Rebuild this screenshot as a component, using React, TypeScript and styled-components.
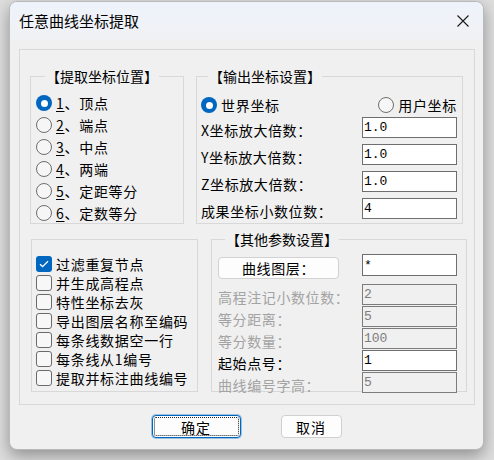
import React from 'react';
import styled, { createGlobalStyle } from 'styled-components';

const GlobalStyle = createGlobalStyle`
  * { box-sizing: border-box; }
  html, body { margin: 0; padding: 0; }
  body {
    background: #dcdcdc;
    font-family: "Noto Sans CJK SC", "Noto Sans", sans-serif;
    color: #000;
  }
`;

const Screen = styled.div`
  width: 494px;
  height: 460px;
  padding: 1px 0 0 9px;
  background: #dedede;
  overflow: hidden;
`;

const Window = styled.div`
  width: 475px;
  height: 449px;
  background: #f0f0f0;
  border: 1px solid #b9b9b9;
  border-radius: 8px;
  box-shadow: 0 6px 16px rgba(0, 0, 0, 0.35);
  overflow: hidden;
  display: flex;
  flex-direction: column;
`;

const TitleBar = styled.div`
  height: 38px;
  flex-shrink: 0;
  display: flex;
  align-items: center;
  justify-content: space-between;
  padding: 0 14px 0 9px;
  background: linear-gradient(#eef3fb, #f0f1f4);
`;

const Title = styled.span`
  font-size: 15px;
  line-height: 20px;
  margin-top: -1px;
`;

const CloseButton = styled.button`
  width: 12px;
  height: 12px;
  padding: 0;
  border: none;
  background: none;
  display: flex;
`;

const Content = styled.div`
  padding: 9px 9px 0 9px;
`;

const OuterFrame = styled.div`
  width: 456px;
  height: 356px;
  border: 1px solid #d8d8d8;
`;

const Row = styled.div<{ $top: number; $left: number; $gap: number }>`
  display: flex;
  margin-top: ${p => p.$top}px;
  padding-left: ${p => p.$left}px;
  gap: ${p => p.$gap}px;
`;

const Group = styled.div<{ $w: number; $h: number }>`
  position: relative;
  width: ${p => p.$w}px;
  height: ${p => p.$h}px;
  border: 1px solid #d8d8d8;
`;

const Legend = styled.span<{ $left: number }>`
  position: absolute;
  top: -10px;
  left: ${p => p.$left}px;
  padding: 0 1px;
  background: #f0f0f0;
  font-size: 14px;
  line-height: 18px;
`;

const RadioList = styled.div`
  padding: 15px 0 0 5px;
`;

const OptionRow = styled.label<{ $h: number }>`
  display: flex;
  align-items: center;
  gap: 4px;
  height: ${p => p.$h}px;
  font-size: 14px;
  letter-spacing: 0.7px;
  white-space: nowrap;
`;

const RadioDot = styled.span<{ $checked?: boolean }>`
  width: 16px;
  height: 16px;
  border-radius: 50%;
  flex-shrink: 0;
  background: ${p => (p.$checked ? '#0067c0' : '#f6f6f6')};
  border: ${p => (p.$checked ? 'none' : '1px solid #6e6e6e')};
  display: flex;
  align-items: center;
  justify-content: center;

  &::after {
    content: '';
    display: ${p => (p.$checked ? 'block' : 'none')};
    width: 7px;
    height: 7px;
    border-radius: 50%;
    background: #fff;
  }
`;

const Key = styled.span`
  text-decoration: underline;
  text-underline-offset: 2px;
`;

const OutputBody = styled.div`
  padding: 18px 5px 0 4px;
`;

const ModeRow = styled.div`
  display: flex;
  justify-content: space-between;
  height: 20px;
`;

const FieldList = styled.div<{ $top: number; $gap: number }>`
  display: flex;
  flex-direction: column;
  gap: ${p => p.$gap}px;
  margin-top: ${p => p.$top}px;
`;

const Field = styled.div`
  display: flex;
  justify-content: space-between;
  align-items: flex-end;
  height: 21px;
`;

const FieldLabel = styled.span<{ $disabled?: boolean }>`
  font-size: 14px;
  line-height: 15px;
  letter-spacing: 0.6px;
  color: ${p => (p.$disabled ? '#a3a3a3' : '#000')};
  white-space: nowrap;
`;

const Input = styled.input<{ $h?: number }>`
  width: 95px;
  height: ${p => p.$h ?? 21}px;
  border: 1px solid #6f6f6f;
  background: #fff;
  padding: 0 1px;
  font-family: "Liberation Mono", monospace;
  font-size: 13px;
  color: #000;
  outline: none;

  &:disabled {
    background: #f0f0f0;
    color: #7d7d7d;
    border-color: #7c7c7c;
  }
`;

const CheckList = styled.div`
  padding: 14px 0 0 4px;
`;

const CheckBox = styled.span<{ $checked?: boolean }>`
  width: 16px;
  height: 16px;
  border-radius: 3px;
  flex-shrink: 0;
  background: ${p => (p.$checked ? '#0067c0' : '#f7f7f7')};
  border: ${p => (p.$checked ? 'none' : '1px solid #6b6b6b')};
  display: flex;
  align-items: center;
  justify-content: center;
`;

const OtherBody = styled.div`
  padding: 14px 9px 0 6px;
`;

const LayerRow = styled.div`
  display: flex;
  justify-content: space-between;
  align-items: flex-start;
`;

const LayerButton = styled.button`
  width: 121px;
  height: 22px;
  margin-top: 3px;
  border: 1px solid #d2d2d2;
  border-radius: 4px;
  background: #fdfdfd;
  font-family: inherit;
  font-size: 14px;
  letter-spacing: 0.6px;
  padding: 0;
  color: #000;
`;

const ButtonRow = styled.div`
  display: flex;
  justify-content: center;
  gap: 40px;
  margin-top: 10px;
`;

const DialogButton = styled.button<{ $w: number; $default?: boolean }>`
  position: relative;
  width: ${p => p.$w}px;
  height: 23px;
  border-radius: 4px;
  border: ${p => (p.$default ? '1px solid #0067c0' : '1px solid #d0d0d0')};
  box-shadow: ${p => (p.$default ? '0 0 0 1px rgba(0,103,192,0.35)' : 'none')};
  background: #fdfdfd;
  font-family: inherit;
  font-size: 14px;
  letter-spacing: 1px;
  padding: 0;
  color: #000;

  &::before {
    content: '';
    display: ${p => (p.$default ? 'block' : 'none')};
    position: absolute;
    inset: 1px;
    border: 1px dotted #222;
    border-radius: 2px;
  }
`;

const positions = [
  { key: '1', label: '顶点', checked: true },
  { key: '2', label: '端点' },
  { key: '3', label: '中点' },
  { key: '4', label: '两端' },
  { key: '5', label: '定距等分' },
  { key: '6', label: '定数等分' },
];

const scales = [
  { label: 'X坐标放大倍数：', value: '1.0' },
  { label: 'Y坐标放大倍数：', value: '1.0' },
  { label: 'Z坐标放大倍数：', value: '1.0' },
  { label: '成果坐标小数位数：', value: '4' },
];

const options = [
  { label: '过滤重复节点', checked: true },
  { label: '并生成高程点' },
  { label: '特性坐标去灰' },
  { label: '导出图层名称至编码' },
  { label: '每条线数据空一行' },
  { label: '每条线从1编号' },
  { label: '提取并标注曲线编号' },
];

const others = [
  { label: '高程注记小数位数：', value: '2', disabled: true },
  { label: '等分距离：', value: '5', disabled: true },
  { label: '等分数量：', value: '100', disabled: true },
  { label: '起始点号：', value: '1' },
  { label: '曲线编号字高：', value: '5', disabled: true },
];

const Check = () => (
  <svg width="10" height="8" viewBox="0 0 10 8">
    <polyline points="1,4.2 3.6,6.6 9,1.2" fill="none" stroke="#fff" strokeWidth="1.3" />
  </svg>
);

const App: React.FC = () => {
  return (
    <Screen>
      <GlobalStyle />
      <Window>
        <TitleBar>
          <Title>任意曲线坐标提取</Title>
          <CloseButton aria-label="关闭">
            <svg width="12" height="12" viewBox="0 0 12 12">
              <path d="M0.5 0.5 L11.5 11.5 M11.5 0.5 L0.5 11.5" stroke="#1a1a1a" strokeWidth="1.1" />
            </svg>
          </CloseButton>
        </TitleBar>

        <Content>
          <OuterFrame>
            <Row $top={26} $left={10} $gap={12}>
              <Group $w={154} $h={148}>
                <Legend $left={14}>【提取坐标位置】</Legend>
                <RadioList>
                  {positions.map(p => (
                    <OptionRow key={p.key} $h={22}>
                      <RadioDot $checked={p.checked} />
                      <span>
                        <Key>{p.key}</Key>、{p.label}
                      </span>
                    </OptionRow>
                  ))}
                </RadioList>
              </Group>

              <Group $w={267} $h={148}>
                <Legend $left={11}>【输出坐标设置】</Legend>
                <OutputBody>
                  <ModeRow>
                    <OptionRow $h={20}>
                      <RadioDot $checked />
                      <span>世界坐标</span>
                    </OptionRow>
                    <OptionRow $h={20}>
                      <RadioDot />
                      <span>用户坐标</span>
                    </OptionRow>
                  </ModeRow>
                  <FieldList $top={2} $gap={6}>
                    {scales.map(s => (
                      <Field key={s.label}>
                        <FieldLabel>{s.label}</FieldLabel>
                        <Input defaultValue={s.value} />
                      </Field>
                    ))}
                  </FieldList>
                </OutputBody>
              </Group>
            </Row>

            <Row $top={15} $left={11} $gap={13}>
              <Group $w={167} $h={153}>
                <CheckList>
                  {options.map(o => (
                    <OptionRow key={o.label} $h={19}>
                      <CheckBox $checked={o.checked}>{o.checked && <Check />}</CheckBox>
                      <span>{o.label}</span>
                    </OptionRow>
                  ))}
                </CheckList>
              </Group>

              <Group $w={256} $h={153}>
                <Legend $left={13}>【其他参数设置】</Legend>
                <OtherBody>
                  <LayerRow>
                    <LayerButton>曲线图层：</LayerButton>
                    <Input $h={22} defaultValue="*" />
                  </LayerRow>
                  <FieldList $top={5} $gap={1}>
                    {others.map(o => (
                      <Field key={o.label}>
                        <FieldLabel $disabled={o.disabled}>{o.label}</FieldLabel>
                        <Input defaultValue={o.value} disabled={o.disabled} />
                      </Field>
                    ))}
                  </FieldList>
                </OtherBody>
              </Group>
            </Row>
          </OuterFrame>

          <ButtonRow>
            <DialogButton $w={89} $default>确定</DialogButton>
            <DialogButton $w={61}>取消</DialogButton>
          </ButtonRow>
        </Content>
      </Window>
    </Screen>
  );
};

export default App;
